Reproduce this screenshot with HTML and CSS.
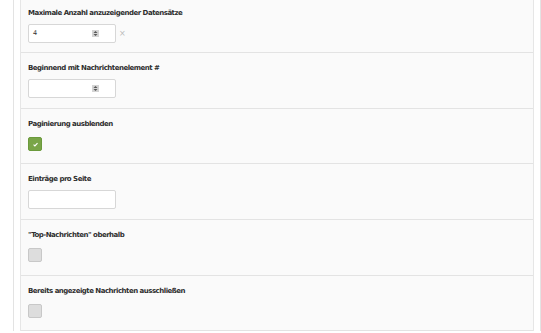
FILE: index.html
```html
<!DOCTYPE html>
<html>
<head>
<meta charset="utf-8">
<link rel="stylesheet" href="styles.css">
</head>
<body>
<div class="outer">
  <div class="panel">
    <div class="row">
      <div class="label">Maximale Anzahl anzuzeigender Datensätze</div>
      <div class="field">
        <div class="input"><span class="val">4</span>
          <span class="spin"><svg width="7" height="7" viewBox="0 0 7 7"><rect x="0" y="0" width="7" height="7" fill="#d4d4d4"/><path d="M1.5 3 L3.5 1 L5.5 3 Z M1.5 4 L3.5 6 L5.5 4 Z" fill="#555"/></svg></span>
        </div>
        <span class="clear">×</span>
      </div>
    </div>
    <div class="row">
      <div class="label">Beginnend mit Nachrichtenelement #</div>
      <div class="field">
        <div class="input">
          <span class="spin"><svg width="7" height="7" viewBox="0 0 7 7"><rect x="0" y="0" width="7" height="7" fill="#d4d4d4"/><path d="M1.5 3 L3.5 1 L5.5 3 Z M1.5 4 L3.5 6 L5.5 4 Z" fill="#555"/></svg></span>
        </div>
      </div>
    </div>
    <div class="row">
      <div class="label">Paginierung ausblenden</div>
      <div class="field">
        <span class="check on"><svg width="7" height="7" viewBox="0 0 8 8"><path d="M1.8 4.2 L3.3 5.6 L6.3 2.4" fill="none" stroke="#fff" stroke-width="1.3"/></svg></span>
      </div>
    </div>
    <div class="row">
      <div class="label">Einträge pro Seite</div>
      <div class="field">
        <div class="input"></div>
      </div>
    </div>
    <div class="row">
      <div class="label">"Top-Nachrichten" oberhalb</div>
      <div class="field">
        <span class="check"></span>
      </div>
    </div>
    <div class="row">
      <div class="label">Bereits angezeigte Nachrichten ausschließen</div>
      <div class="field">
        <span class="check"></span>
      </div>
    </div>
  </div>
</div>
</body>
</html>
```
FILE: styles.css
```css
html, body {
  margin: 0;
  padding: 0;
  background: #fff;
}
body {
  font-family: "DejaVu Sans", Verdana, sans-serif;
  color: #333;
  overflow: hidden;
}
.outer {
  box-sizing: border-box;
  margin-left: 13px;
  width: 528px;
  border-left: 1px solid #e3e3e3;
  border-right: 1px solid #e3e3e3;
  padding: 0 6px;
  margin-top: -2.4px;
}
.panel {
  background: #fafafa;
  border-left: 1px solid #e6e6e6;
  border-right: 1px solid #e6e6e6;
}
.row {
  padding: 10px 7px 9.6px 7px;
  border-bottom: 1px solid #e3e3e3;
}
.label {
  font-size: 7px;
  font-weight: bold;
  letter-spacing: -0.5px;
  line-height: 10px;
  height: 10px;
  white-space: nowrap;
  color: #2e2e2e;
}
.field {
  margin-top: 6px;
  height: 19px;
  display: flex;
  align-items: center;
}
.input {
  box-sizing: border-box;
  width: 88px;
  height: 19px;
  background: #fff;
  border: 1px solid #d7d7d7;
  border-radius: 2px;
  display: flex;
  align-items: center;
  padding: 0 4px;
}
.val {
  font-size: 6.5px;
  flex: 1;
}
.spin {
  margin-left: auto;
  margin-right: 12px;
  display: flex;
}
.clear {
  margin-left: 3px;
  font-size: 8px;
  color: #bbb;
}
.check {
  box-sizing: border-box;
  width: 14px;
  height: 14px;
  border-radius: 2px;
  background: #ddd;
  border: 1px solid #c8c8c8;
  display: flex;
  align-items: center;
  justify-content: center;
}
.check.on {
  background: #79a548;
  border-color: #6b9a3c;
}
```
